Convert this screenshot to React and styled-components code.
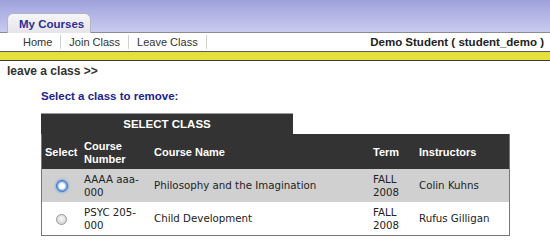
import React from 'react'
import styled, { createGlobalStyle } from 'styled-components'

const Global = createGlobalStyle`
  body {
    margin: 0;
    background: #fff;
    font-family: "Liberation Sans", Arial, sans-serif;
    font-size: 11px;
    color: #222;
  }
`;

const TopBand = styled.div`
  height: 32px;
  background: linear-gradient(#9ea2dc, #c9cbef);
  display: flex;
  align-items: flex-end;
  padding-left: 7px;
  border-bottom: 1px solid #8c8c8c;
`;

const Tab = styled.div`
  width: 84px;
  height: 20px;
  margin-bottom: -1px;
  box-sizing: border-box;
  border: 1px solid #b4b4c4;
  border-bottom: none;
  border-radius: 6px 6px 0 0;
  background: linear-gradient(#f6f6f8, #e4e4ea);
  color: #2e2e94;
  font-weight: bold;
  font-size: 11.5px;
  padding: 4px 0 0 11px;
`;

const NavBar = styled.div`
  height: 18px;
  display: flex;
  align-items: center;
  justify-content: space-between;
  padding: 0 6px 0 15px;
  background: #fff;
`;

const NavLinks = styled.div`
  display: flex;
  align-items: center;
`;

const NavLink = styled.span`
  padding: 0 8px;
  font-size: 11px;
  color: #333;
  border-right: 1px solid #d0d0d0;
  line-height: 14px;
`;

const UserName = styled.span`
  font-weight: bold;
  font-size: 11.5px;
  color: #222;
`;

const YellowBar = styled.div`
  height: 8px;
  background: #e4e03c;
  border-top: 1px solid #5a5a5a;
  border-bottom: 1px solid #3c3c3c;
`;

const Crumb = styled.div`
  font-weight: bold;
  font-size: 12px;
  color: #333;
  padding: 3px 0 0 7px;
`;

const Content = styled.div`
  padding: 12px 0 0 41px;
`;

const Prompt = styled.div`
  font-weight: bold;
  font-size: 11.5px;
  color: #23238f;
  margin-bottom: 11px;
`;

const TableTitle = styled.div`
  width: 252px;
  height: 21px;
  box-sizing: border-box;
  background: #333;
  border-top: 1px solid #9a9a9a;
  color: #fff;
  font-weight: bold;
  font-size: 11.5px;
  text-align: center;
  padding-top: 4px;
`;

const Table = styled.table`
  width: 469px;
  border-collapse: collapse;
  border: 1px solid #777;
  border-top: none;
`;

const Th = styled.th`
  background: #333;
  color: #fff;
  font-weight: bold;
  font-size: 11px;
  text-align: left;
  height: 33px;
  padding: 2px 3px 0 3px;
  line-height: 13px;
  width: ${p => p.$w}px;
`;

const Tr = styled.tr`
  background: ${p => (p.$alt ? '#d0d0d0' : '#fff')};
`;

const Td = styled.td`
  height: 33px;
  padding: 0 3px;
  font-family: "DejaVu Sans", Verdana, sans-serif;
  font-size: 10.25px;
  line-height: 13px;
  color: #222;
  text-align: ${p => (p.$center ? 'center' : 'left')};
`;

const Radio = styled.span`
  display: inline-block;
  width: ${p => (p.$focus ? 12 : 11)}px;
  height: ${p => (p.$focus ? 12 : 11)}px;
  border-radius: 50%;
  vertical-align: middle;
  box-sizing: border-box;
  background: ${p => (p.$focus ? 'radial-gradient(circle, #fff 0 35%, #cfe0f5 45%, #5d8fd0 75%)' : 'radial-gradient(circle at 50% 40%, #fafafa, #c8c8c8)')};
  border: 1px solid ${p => (p.$focus ? '#3f78c8' : '#9a9a9a')};
  box-shadow: ${p => (p.$focus ? '0 0 2px 1px #8ab0e4' : 'none')};
`;

const rows = [
  { num: ['AAAA aaa-', '000'], name: 'Philosophy and the Imagination', term: ['FALL', '2008'], inst: 'Colin Kuhns', focus: true },
  { num: ['PSYC 205-', '000'], name: 'Child Development', term: ['FALL', '2008'], inst: 'Rufus Gilligan' },
]

export default function App() {
  return (
    <>
      <Global />
      <TopBand>
        <Tab>My Courses</Tab>
      </TopBand>
      <NavBar>
        <NavLinks>
          <NavLink>Home</NavLink>
          <NavLink>Join Class</NavLink>
          <NavLink>Leave Class</NavLink>
        </NavLinks>
        <UserName>Demo Student ( student_demo )</UserName>
      </NavBar>
      <YellowBar />
      <Crumb>leave a class &gt;&gt;</Crumb>
      <Content>
        <Prompt>Select a class to remove:</Prompt>
        <TableTitle>SELECT CLASS</TableTitle>
        <Table>
          <thead>
            <tr>
              <Th $w={33}>Select</Th>
              <Th $w={64}>Course<br />Number</Th>
              <Th $w={213}>Course Name</Th>
              <Th $w={40}>Term</Th>
              <Th>Instructors</Th>
            </tr>
          </thead>
          <tbody>
            {rows.map((r, i) => (
              <Tr key={i} $alt={i === 0}>
                <Td $center><Radio $focus={r.focus} /></Td>
                <Td>{r.num[0]}<br />{r.num[1]}</Td>
                <Td>{r.name}</Td>
                <Td>{r.term[0]}<br />{r.term[1]}</Td>
                <Td>{r.inst}</Td>
              </Tr>
            ))}
          </tbody>
        </Table>
      </Content>
    </>
  );
}
